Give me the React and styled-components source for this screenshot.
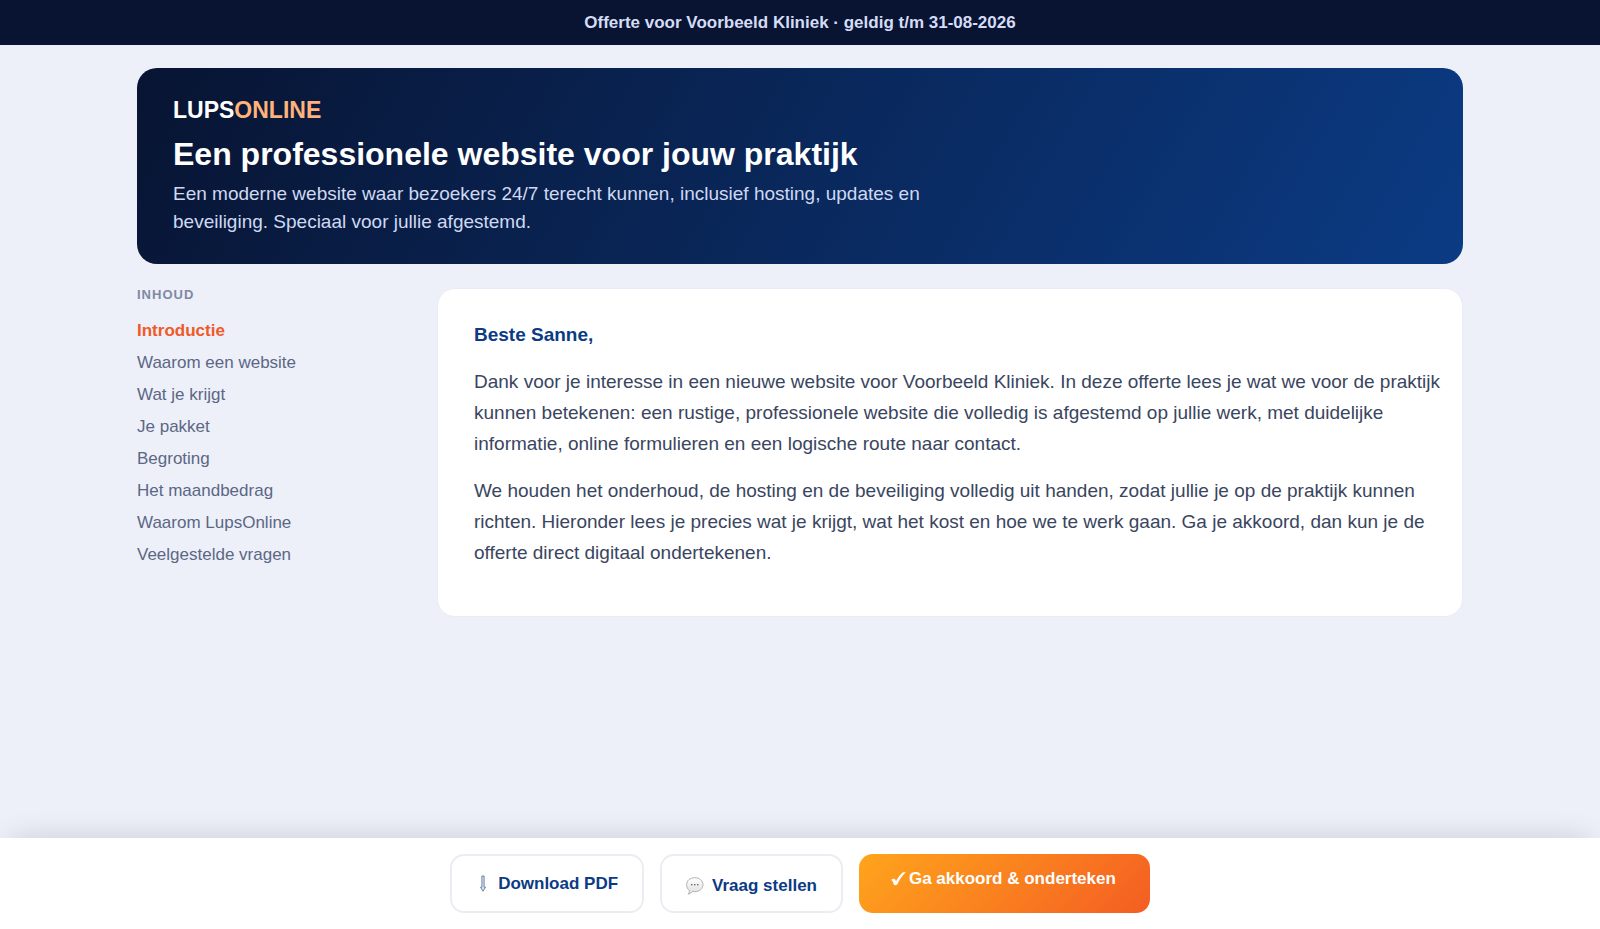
import React, { useState } from "react";
import styled, { createGlobalStyle, css } from "styled-components";

const GlobalStyle = createGlobalStyle`
  *, *::before, *::after {
    box-sizing: border-box;
  }
  body {
    margin: 0;
    background: #edf0f8;
    color: #3a4560;
    font-family: "Liberation Sans", Arial, sans-serif;
  }
`;

const Page = styled.div`
  min-height: 100vh;
  display: flex;
  flex-direction: column;
`;

const TopBar = styled.header`
  padding: 12px 24px;
  background: #081432;
  color: #d5dcf5;
  font-size: 17px;
  font-weight: 700;
  line-height: 21px;
  text-align: center;
`;

const Container = styled.div`
  width: 100%;
  max-width: 1374px;
  margin: 0 auto;
  padding: 23px 24px;
  display: flex;
  flex-direction: column;
  gap: 24px;
`;

const Hero = styled.section`
  padding: 28px 36px;
  border-radius: 20px;
  background: linear-gradient(120deg, #081432 0%, #0b3b84 100%);
  color: #fff;
`;

const Logo = styled.div`
  margin-bottom: 11px;
  font-size: 23px;
  font-weight: 700;
  line-height: 28px;

  span {
    color: #ffb27a;
  }
`;

const Title = styled.h1`
  margin: 0 0 7px;
  font-size: 32px;
  line-height: 38px;
`;

const Lead = styled.p`
  max-width: 760px;
  margin: 0;
  color: #cfd9f2;
  font-size: 19px;
  line-height: 28px;
`;

const Columns = styled.div`
  display: grid;
  grid-template-columns: 264px minmax(0, 1fr);
  gap: 36px;
  align-items: start;
`;

const NavTitle = styled.div`
  margin-bottom: 14px;
  color: #8089a3;
  font-size: 13px;
  font-weight: 700;
  letter-spacing: 1px;
  line-height: 13px;
`;

const NavList = styled.ul`
  margin: 0;
  padding: 0;
  list-style: none;
`;

const NavLink = styled.a`
  display: block;
  padding: 6px 0;
  color: #5b6785;
  font-size: 17px;
  line-height: 20px;
  text-decoration: none;

  ${({ $active }) =>
    $active &&
    css`
      color: #f0592a;
      font-weight: 700;
    `}
`;

const Card = styled.article`
  padding: 32px 20px 32px 36px;
  border: 1px solid #e9ecf4;
  border-radius: 18px;
  background: #fff;
`;

const Greeting = styled.h2`
  margin: 0 0 17px;
  color: #0b3b84;
  font-size: 19px;
  line-height: 28px;
`;

const Paragraph = styled.p`
  margin: 0 0 16px;
  font-size: 19px;
  line-height: 31px;
`;

const ActionBar = styled.footer`
  position: sticky;
  bottom: 0;
  margin-top: auto;
  padding: 16px 24px;
  display: flex;
  justify-content: center;
  gap: 16px;
  background: #fff;
  box-shadow: 0 -10px 30px -12px rgba(8, 20, 48, 0.18);
`;

const Button = styled.button`
  height: 59px;
  padding: 0 24px;
  display: flex;
  align-items: center;
  gap: 8px;
  border: 2px solid #ecedf2;
  border-radius: 14px;
  background: #fff;
  color: #0b3b84;
  font-family: inherit;
  font-size: 17px;
  font-weight: 700;
  line-height: 20px;
  cursor: pointer;
`;

const QuestionButton = styled(Button)`
  padding-top: 5px;
`;

const PrimaryButton = styled(Button)`
  padding: 0 34px 10px 32px;
  gap: 2px;
  border: 0;
  background: linear-gradient(135deg, #ffa51c 0%, #f45d22 100%);
  color: #fff;
`;

function ArrowIcon() {
  return (
    <svg width="14" height="18" viewBox="0 0 14 18" fill="none" stroke="#5f78a3" aria-hidden="true">
      <path d="M5.900 1v11.200H4.500L7 16.200l2.500-4H8.100V1z" strokeWidth="0.900" fill="#dde4ef" />
    </svg>
  );
}

function BubbleIcon() {
  return (
    <svg width="18" height="18" viewBox="0 0 18 18" aria-hidden="true">
      <defs>
        <linearGradient id="bubble" x1="0" y1="0" x2="0" y2="1">
          <stop offset="0" stopColor="#ffffff" />
          <stop offset="1" stopColor="#dedede" />
        </linearGradient>
      </defs>
      <path
        d="M8.800.7c4.700 0 8.200 3 8.200 7s-3.500 7-8.200 7c-.8 0-1.600-.1-2.300-.3-.9 1.300-2.400 2.300-4.500 2.700 1-1 1.500-2.300 1.400-3.700C1.600 12.200.6 10.200.6 7.700c0-4 3.500-7 8.200-7z"
        fill="url(#bubble)"
        stroke="#a9a9a9"
        strokeWidth="0.900"
      />
      <g fill="#555">
        <circle cx="5.800" cy="7.700" r="0.800" />
        <circle cx="8.800" cy="7.700" r="0.800" />
        <circle cx="11.800" cy="7.700" r="0.800" />
      </g>
    </svg>
  );
}

function CheckIcon() {
  return (
    <svg width="16" height="16" viewBox="0 0 16 16" fill="#fff" aria-hidden="true">
      <path d="M.3 8.800c1.300-1.400 3.600-1.200 4.200.3l.5 1.100C6.800 6.800 9.200 3.600 11.900 1.300h3C11 5 8.200 9 6.200 13.600c-.9.600-2.300.7-3.100.5C2.600 12.200 1.700 10.400.3 8.800z" />
    </svg>
  );
}

const sections = [
  "Introductie",
  "Waarom een website",
  "Wat je krijgt",
  "Je pakket",
  "Begroting",
  "Het maandbedrag",
  "Waarom LupsOnline",
  "Veelgestelde vragen",
];

function App() {
  const [active, setActive] = useState(sections[0]);

  return (
    <Page>
      <GlobalStyle />
      <TopBar>Offerte voor Voorbeeld Kliniek · geldig t/m 31-08-2026</TopBar>
      <Container>
        <Hero>
          <Logo>
            LUPS<span>ONLINE</span>
          </Logo>
          <Title>Een professionele website voor jouw praktijk</Title>
          <Lead>
            Een moderne website waar bezoekers 24/7 terecht kunnen, inclusief hosting, updates en
            beveiliging. Speciaal voor jullie afgestemd.
          </Lead>
        </Hero>
        <Columns>
          <nav aria-label="Inhoud">
            <NavTitle>INHOUD</NavTitle>
            <NavList>
              {sections.map((section) => (
                <li key={section}>
                  <NavLink
                    href="#offerte"
                    $active={section === active}
                    onClick={() => setActive(section)}
                  >
                    {section}
                  </NavLink>
                </li>
              ))}
            </NavList>
          </nav>
          <Card id="offerte">
            <Greeting>Beste Sanne,</Greeting>
            <Paragraph>
              Dank voor je interesse in een nieuwe website voor Voorbeeld Kliniek. In deze offerte
              lees je wat we voor de praktijk kunnen betekenen: een rustige, professionele website
              die volledig is afgestemd op jullie werk, met duidelijke informatie, online
              formulieren en een logische route naar contact.
            </Paragraph>
            <Paragraph>
              We houden het onderhoud, de hosting en de beveiliging volledig uit handen, zodat
              jullie je op de praktijk kunnen richten. Hieronder lees je precies wat je krijgt, wat
              het kost en hoe we te werk gaan. Ga je akkoord, dan kun je de offerte direct digitaal
              ondertekenen.
            </Paragraph>
          </Card>
        </Columns>
      </Container>
      <ActionBar>
        <Button type="button">
          <ArrowIcon />
          Download PDF
        </Button>
        <QuestionButton type="button">
          <BubbleIcon />
          Vraag stellen
        </QuestionButton>
        <PrimaryButton type="button">
          <CheckIcon />
          Ga akkoord &amp; onderteken
        </PrimaryButton>
      </ActionBar>
    </Page>
  );
}

export default App;
